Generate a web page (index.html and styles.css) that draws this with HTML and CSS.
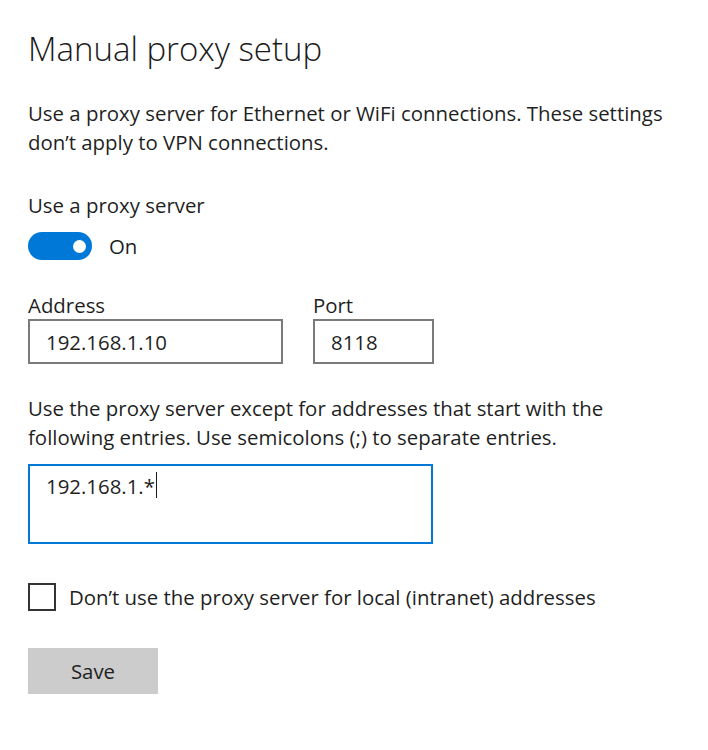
FILE: index.html
```html
<!doctype html>
<html lang="en">
<head>
    <meta charset="utf-8">
    <title>Manual proxy setup</title>
    <link rel="stylesheet" href="styles.css">
</head>
<body>
    <div class="page">
        <h1>Manual proxy setup</h1>
        <p class="desc">Use a proxy server for Ethernet or WiFi connections. These settings don’t apply to VPN connections.</p>

        <div class="setting">
            <div class="setting-label">Use a proxy server</div>
            <div class="toggle-row">
                <span class="toggle"><span class="knob"></span></span>
                <span class="toggle-text">On</span>
            </div>
        </div>

        <div class="fields">
            <div class="field">
                <label for="address">Address</label>
                <div class="box address" id="address">192.168.1.10</div>
            </div>
            <div class="field">
                <label for="port">Port</label>
                <div class="box port" id="port">8118</div>
            </div>
        </div>

        <p class="desc except">Use the proxy server except for addresses that start with the following entries. Use semicolons (;) to separate entries.</p>
        <div class="box exceptions">192.168.1.*<span class="caret"></span></div>

        <div class="check-row">
            <span class="checkbox"></span>
            <span class="check-text">Don’t use the proxy server for local (intranet) addresses</span>
        </div>

        <button class="save-btn" type="button">Save</button>
    </div>
</body>
</html>
```

FILE: styles.css
```css
/* General styling */
body {
    margin: 0;
    padding: 0;
    background: #ffffff;
    font-family: 'Open Sans', 'Noto Sans', sans-serif;
    color: #1f1f1f;
}

.page {
    padding: 24px 28px 40px 28px;
    width: 645px;
}

h1 {
    margin: 0;
    font-size: 33px;
    font-weight: 300;
    line-height: 50px;
    color: #1a1a1a;
}

.desc {
    margin: 25px 0 0 0;
    font-size: 20.4px;
    line-height: 29px;
}

/* Toggle */
.setting {
    margin-top: 34px;
}

.setting-label {
    font-size: 20.4px;
    line-height: 29px;
}

.toggle-row {
    display: flex;
    align-items: center;
    gap: 17px;
    margin-top: 12px;
}

.toggle {
    width: 64px;
    height: 28px;
    border-radius: 14px;
    background-color: #0078d7;
    display: flex;
    align-items: center;
    justify-content: flex-end;
    padding-right: 6px;
    box-sizing: border-box;
}

.knob {
    width: 13px;
    height: 13px;
    border-radius: 50%;
    background: #ffffff;
}

.toggle-text {
    font-size: 20.4px;
}

/* Address & port */
.fields {
    display: flex;
    gap: 30px;
    margin-top: 31px;
}

.field label {
    display: block;
    font-size: 20.4px;
    line-height: 28px;
}

.box {
    border: 2px solid #7a7a7a;
    box-sizing: border-box;
    font-size: 20.4px;
    padding: 0 16px;
    display: flex;
    align-items: center;
}

.address {
    width: 255px;
    height: 45px;
}

.port {
    width: 121px;
    height: 45px;
}

.except {
    margin-top: 30px;
}

.exceptions {
    width: 405px;
    height: 80px;
    margin-top: 12px;
    border-color: #0078d7;
    align-items: flex-start;
    padding-top: 6px;
}

.caret {
    display: inline-block;
    width: 1px;
    height: 26px;
    background: #1a1a1a;
    margin-left: 1px;
}

/* Checkbox */
.check-row {
    display: flex;
    align-items: center;
    gap: 13px;
    margin-top: 39px;
}

.checkbox {
    width: 28px;
    height: 28px;
    border: 2px solid #333333;
    box-sizing: border-box;
}

.check-text {
    font-size: 20.4px;
}

.save-btn {
    margin-top: 37px;
    width: 130px;
    height: 46px;
    border: none;
    background-color: #cccccc;
    font-family: inherit;
    font-size: 20.4px;
    color: #1f1f1f;
}
```
